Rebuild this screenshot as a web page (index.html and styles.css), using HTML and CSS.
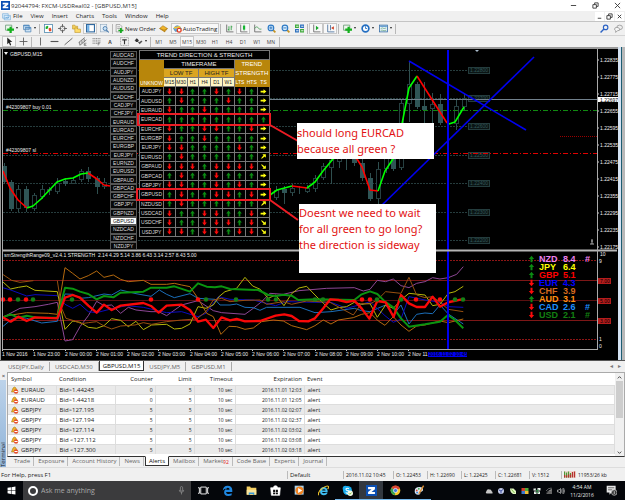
FILE: index.html
```html
<!DOCTYPE html>
<html lang="en">
<head>
<meta charset="utf-8">
<title>92044794: FXCM-USDReal02 - [GBPUSD,M15]</title>
<link rel="stylesheet" href="styles.css">
</head>
<body>
<svg class="sprite" aria-hidden="true">
  <symbol id="z" viewBox="0 0 16 16"><rect width="16" height="16" fill="#0b4fb3"/><path d="M3 3h10v3l-5 4h5v3H3v-3l5-4H3z" fill="#fff"/></symbol>
  <symbol id="charts" viewBox="0 0 16 16"><path d="M1 3h10v8H1zM4 6h11v8H4z" fill="#d9ecfa" stroke="#6aa5d8"/><path d="M6 11l2-2 2 2 3-3" fill="none" stroke="#3c87c8"/></symbol>
  <symbol id="new" viewBox="0 0 16 16"><path d="M1 2h11v9H1z" fill="#eef6ee" stroke="#6d9c78" stroke-width="1.5"/><path d="M8 5h4v3h4v4h-4v4H8v-4H4V8h4z" fill="#14b01c"/></symbol>
  <symbol id="wins" viewBox="0 0 16 16"><path d="M1 2h10v8H1zM4 6h10v8H4z" fill="#d8ebfb" stroke="#5689b6" stroke-width="1.4"/><path d="M1 3h10M4 7h10" stroke="#4381bd" stroke-width="2"/></symbol>
  <symbol id="market" viewBox="0 0 16 16"><rect x="1" y="1" width="14" height="14" fill="#fff" stroke="#4d88ad" stroke-width="1.4"/><path d="M3 9V5l3-2 2 2-2 4z" fill="#1db029"/><path d="M8 8l3-2 2 3v4H9z" fill="#e24b26"/></symbol>
  <symbol id="target" viewBox="0 0 16 16"><circle cx="8" cy="8" r="4.5" fill="none" stroke="#555" stroke-width="1.5"/><path d="M8 0v6M8 10v6M0 8h6M10 8h6" stroke="#555" stroke-width="1.5"/></symbol>
  <symbol id="folders" viewBox="0 0 16 16"><path d="M1 2h4l1 2h4v5H1z" fill="#f3cf5b" stroke="#b98e20"/><path d="M5 7h4l1 2h5v6H5z" fill="#ffdc6b" stroke="#b98e20"/></symbol>
  <symbol id="panel" viewBox="0 0 16 16"><rect x="1" y="1" width="14" height="13" fill="#fff" stroke="#31699f" stroke-width="2"/><path d="M2 2h4v11H2z" fill="#6fb0e6"/></symbol>
  <symbol id="tester" viewBox="0 0 16 16"><rect x="1" y="1" width="11" height="13" fill="#e7f0f8" stroke="#8aa4bb"/><circle cx="9" cy="8" r="3.5" fill="#cde5f8" stroke="#4275a8" stroke-width="1.5"/><path d="M11.500 11l4 4" stroke="#4275a8" stroke-width="2"/></symbol>
  <symbol id="order" viewBox="0 0 16 16"><path d="M2 1h7l3 3v10H2z" fill="#f4f4f4" stroke="#777"/><path d="M4 5h5M4 8h5" stroke="#777"/><path d="M9 7h3v3h3v3h-3v3H9v-3H6v-3h3z" fill="#12a81c"/></symbol>
  <symbol id="gold" viewBox="0 0 16 16"><path d="M1 8l6-5 8 5-5 6z" fill="#f1b62b" stroke="#a06d0d"/><path d="M1 8l8 3 6-3M9 11l1 3" stroke="#a06d0d" fill="none"/></symbol>
  <symbol id="robot" viewBox="0 0 16 16"><path d="M1 8q6-10 14 0l-3 5H4z" fill="#65ace2" stroke="#376f9d"/><path d="M2 7l11-2" stroke="#f5c434" stroke-width="3"/><circle cx="11" cy="11" r="4.500" fill="#e23b20"/><rect x="9" y="9" width="4" height="4" fill="#fff"/></symbol>
  <symbol id="bars" viewBox="0 0 16 16"><path d="M3 1v13h12" fill="none" stroke="#666" stroke-width="1.500"/><path d="M7 4v8M5 10h2M11 3v8M11 5h2" stroke="#2b9b3d" stroke-width="1.500"/></symbol>
  <symbol id="candle" viewBox="0 0 16 16"><path d="M3 1v13h12" fill="none" stroke="#666" stroke-width="1.500"/><path d="M9 1v11" stroke="#12902c"/><rect x="7" y="3" width="4" height="7" fill="#15b530"/></symbol>
  <symbol id="line" viewBox="0 0 16 16"><path d="M3 1v13h12" fill="none" stroke="#666" stroke-width="1.500"/><path d="M3 8q4-6 7 0 2 2 5 1" fill="none" stroke="#3a9a4a" stroke-width="1.300"/></symbol>
  <symbol id="zin" viewBox="0 0 16 16"><path d="M10 10l5 5" stroke="#c59424" stroke-width="3"/><circle cx="7" cy="7" r="5" fill="#d8efff" stroke="#2b78c4" stroke-width="2"/><path d="M4 7h6M7 4v6" stroke="#2269b5" stroke-width="1.500"/></symbol>
  <symbol id="zout" viewBox="0 0 16 16"><path d="M10 10l5 5" stroke="#c59424" stroke-width="3"/><circle cx="7" cy="7" r="5" fill="#d8efff" stroke="#2b78c4" stroke-width="2"/><path d="M4 7h6" stroke="#2269b5" stroke-width="1.500"/></symbol>
  <symbol id="tiles" viewBox="0 0 16 16"><path d="M0 1h7v6H0zM9 9h7v6H9z" fill="#3fa93b"/><path d="M9 1h7v6H9zM0 9h7v6H0z" fill="#2e71bd"/><path d="M2 4h4M11 4h4M2 12h4M11 12h4" stroke="#fff" stroke-width="1.500"/></symbol>
  <symbol id="shift" viewBox="0 0 16 16"><path d="M3 1v13h12" fill="none" stroke="#666" stroke-width="1.500"/><path d="M7 3v8l5-4z" fill="#17a72a"/></symbol>
  <symbol id="scroll" viewBox="0 0 16 16"><path d="M3 1v13h12M8 2v9" fill="none" stroke="#476f9c" stroke-width="1.500"/><path d="M14 4v6l-5-3z" fill="#d04326"/></symbol>
  <symbol id="clock" viewBox="0 0 16 16"><circle cx="8" cy="8" r="6" fill="#fff" stroke="#246fc2" stroke-width="3"/><path d="M8 4v4h3" fill="none" stroke="#246fc2" stroke-width="1.500"/></symbol>
  <symbol id="tmpl" viewBox="0 0 16 16"><rect x="1" y="2" width="14" height="12" fill="#eaf4fc" stroke="#3f74a8" stroke-width="1.500"/><path d="M2 4h12" stroke="#4d8fcb" stroke-width="2"/><path d="M3 8l3-1 3 1 4-1M3 11h3l3 1 4-1" fill="none" stroke="#3f8f5a"/></symbol>
  <symbol id="find" viewBox="0 0 16 16"><circle cx="10" cy="6" r="4" fill="none" stroke="#2b62c4" stroke-width="2"/><path d="M7 9l-6 6" stroke="#2b62c4" stroke-width="2.500"/></symbol>
  <symbol id="chat" viewBox="0 0 16 16"><ellipse cx="10" cy="6" rx="5" ry="4" fill="#eee" stroke="#999" stroke-width="1.500"/><path d="M1 9q0-3 4-3t5 3-4 3l-3 3v-3q-2-1-2-3z" fill="#f6f6f6" stroke="#999" stroke-width="1.500"/></symbol>
  <symbol id="arrow" viewBox="0 0 16 16"><path d="M4 1v12l3-3 2 5 2-1-2-5h4z" fill="#222"/></symbol>
  <symbol id="cross" viewBox="0 0 16 16"><path d="M8 1v14M1 8h14" stroke="#555" stroke-width="1.500"/></symbol>
  <symbol id="vline" viewBox="0 0 16 16"><path d="M8 1v14" stroke="#555" stroke-width="1.500"/></symbol>
  <symbol id="hline" viewBox="0 0 16 16"><path d="M1 8h14" stroke="#555" stroke-width="2"/></symbol>
  <symbol id="tline" viewBox="0 0 16 16"><path d="M1 14L15 2" stroke="#555" stroke-width="1.500"/></symbol>
  <symbol id="chan" viewBox="0 0 16 16"><path d="M1 10L12 1M3 15L15 5M3 9v5M7 6v5M11 3v5" stroke="#555" stroke-width="1.300"/><path d="M11 11h4M11 11v4h4M11 13h3" fill="none" stroke="#555"/></symbol>
  <symbol id="fibo" viewBox="0 0 16 16"><path d="M1 3h14M1 7h14M1 11h10" stroke="#666" stroke-width="1.500" stroke-dasharray="2 1"/><path d="M11 10h4M11 10v5M11 12h3" stroke="#555" fill="none"/></symbol>
  <symbol id="label" viewBox="0 0 16 16"><rect x="1" y="1" width="14" height="14" fill="none" stroke="#777" stroke-dasharray="2 1"/><path d="M4 5h8M8 5v8" stroke="#333" stroke-width="2"/></symbol>
  <symbol id="marks" viewBox="0 0 16 16"><path d="M1 6l4-4 4 4-2 1v2H3V7z" fill="#333"/><path d="M7 9l3 4 5-5-2-2-3 3-2-1z" fill="#555"/></symbol>
  <symbol id="bell" viewBox="0 0 16 16"><path d="M3 9l2-5q3-4 6 0l2 6-2 2H2z" fill="#eeb62e" stroke="#946a12"/><circle cx="11" cy="11" r="4.500" fill="#e5512d"/><path d="M8 11h6" stroke="#fff" stroke-width="2"/></symbol>
  <symbol id="net" viewBox="0 0 24 14"><rect width="24" height="14" fill="#f2d9d2"/><path d="M1 1v12M5 3v10M9 1v12M13 4v9" stroke="#4c9a36" stroke-width="2.500"/><path d="M1 8v5M5 9v4M9 7v6M13 7v6M17 2v11M21 1v12" stroke="#b5302c" stroke-width="2.500"/></symbol>
  <symbol id="start" viewBox="0 0 16 16"><path d="M1 3l6-1v5.500H1zM8 2l7-1v6.500H8zM1 8.500h6V14l-6-1zM8 8.500h7V15l-7-1z" fill="#fff"/></symbol>
  <symbol id="mic" viewBox="0 0 16 16"><rect x="6" y="1" width="4" height="8" rx="2" fill="none" stroke="#aaa"/><path d="M4 7q0 4 4 4t4-4M8 11v4" fill="none" stroke="#aaa"/></symbol>
  <symbol id="tasks" viewBox="0 0 16 16"><path d="M4 3h8v10H4zM0 4h2v8H0M16 4h-2v8h2" fill="none" stroke="#fff" stroke-width="1.300"/></symbol>
  <symbol id="edge" viewBox="0 0 16 16"><path d="M1 8Q2 1 8 1q7 0 7 7v2H6q0 3 4 3 2 0 4-1v3q-2 1-5 1-6 0-6-6 0-3 4-5Q3 5 1 8zM6 7h5q0-3-2.500-3T6 7z" fill="#1f87e0"/></symbol>
  <symbol id="folder" viewBox="0 0 16 16"><path d="M1 2h5l1 2h8v10H1z" fill="#f4cf62"/><path d="M1 7h14v7H1z" fill="#fbe69c"/><path d="M4 14v-3h8v3h-2v-1H6v1z" fill="#3a9ad9"/></symbol>
  <symbol id="store" viewBox="0 0 16 16"><path d="M1 4h14l-1 11H2zM5 4q0-3 3-3t3 3" fill="#fff" stroke="#fff"/><path d="M4.500 7h3v3h-3zM8.500 7h3v3h-3zM4.500 11h3v2.500h-3zM8.500 11h3v2.500h-3z" fill="#111"/></symbol>
  <symbol id="wmp" viewBox="0 0 16 16"><rect x="1" y="1" width="13" height="13" fill="#a9d3ee"/><circle cx="8" cy="8" r="6" fill="#f08322"/><path d="M6 4.500v7l6-3.500z" fill="#fff"/></symbol>
  <symbol id="ie" viewBox="0 0 16 16"><path d="M3 7q1-4 5.500-4T14 8.500V10H6q0 2 2.500 2 2 0 3-1h2.500q-1 4-5.500 4Q3 15 3 9.500zM6 8h5q0-2-2.500-2T6 8z" fill="#3fbdf1"/><path d="M1 15Q-1 10 6 5t9-3q1 1-1 4" fill="none" stroke="#f1c62c" stroke-width="1.500"/></symbol>
  <symbol id="skype" viewBox="0 0 16 16"><circle cx="5" cy="5" r="4" fill="#19aef0"/><circle cx="8" cy="8" r="6.500" fill="#19aef0"/><path d="M10 5.500Q8 4 6.500 5t0 2.300 3 1.200 0 2.500-4-.5" fill="none" stroke="#fff" stroke-width="1.500"/><circle cx="12" cy="12" r="4" fill="#f3f9e8"/><path d="M10 12l1.500 1.500L14 11" fill="none" stroke="#6db31e" stroke-width="1.300"/></symbol>
  <symbol id="chrome" viewBox="0 0 16 16"><circle cx="8" cy="8" r="7" fill="#f6c728"/><path d="M8 8L2 4.400A7 7 0 0 1 14.500 5z" fill="#dc4535"/><path d="M8 8l-1 7A7 7 0 0 1 2 4.400z" fill="#35a252"/><circle cx="8" cy="8" r="3" fill="#3f7de0" stroke="#fff"/></symbol>
  <symbol id="paint" viewBox="0 0 16 16"><path d="M1 9q0-6 7-6 6 0 5 5-1 2-4 2 1 4-3 4-5 0-5-5z" fill="#d8e7f5"/><circle cx="4" cy="8" r="1.300" fill="#d94b2d"/><circle cx="7" cy="5.500" r="1.300" fill="#3caa41"/><circle cx="4.500" cy="11" r="1.300" fill="#2d77d2"/><path d="M7 13L14 1" stroke="#de9237" stroke-width="2"/></symbol>
  <symbol id="cloud" viewBox="0 0 16 16"><path d="M3 13q-3-2 0-5 1-5 6-3 4-1 4 3 3 1 2 5z" fill="#c6c6c6"/></symbol>
  <symbol id="orb" viewBox="0 0 16 16"><circle cx="8" cy="8" r="6" fill="#c4cbe6"/><path d="M4 6l4 2 4-3M8 8v5" stroke="#3c4f9e" stroke-width="2" fill="none"/></symbol>
  <symbol id="leaf" viewBox="0 0 16 16"><path d="M2 3h7l5 5v6H8q-6-3-6-11z" fill="#dff5c0"/><path d="M5 5l6 7" stroke="#5eaa20" stroke-width="1.500"/></symbol>
  <symbol id="flag" viewBox="0 0 16 16"><path d="M1 2h7v6H1z" fill="#d7402b"/><path d="M8 2h7v6H8z" fill="#51ac3a"/><path d="M1 8h7v6H1z" fill="#3d79cd"/><path d="M8 8h7v6H8z" fill="#f1bf35"/></symbol>
  <symbol id="sync" viewBox="0 0 16 16"><path d="M1 3h5v4H1zM9 2h6v5H9zM2 9h5v5H2zM9 9h5v5H9z" fill="#eee"/><path d="M5 5l3 3 4-3M5 12l3-3 4 3" stroke="#2fa84c" fill="none" stroke-width="1.500"/></symbol>
  <symbol id="wifi" viewBox="0 0 16 16"><path d="M2 14L14 2v12z" fill="#666"/><path d="M2 8Q6 2 13 2M4 11q3-5 9-5" stroke="#bbb" fill="none"/></symbol>
  <symbol id="vol" viewBox="0 0 16 16"><path d="M1 6h3l3-3v10l-3-3H1zM9 5q2 3 0 6M11 3q4 5 0 10M13 2q4 6 0 12" fill="none" stroke="#ddd" stroke-width="1.200"/></symbol>
  <symbol id="note" viewBox="0 0 16 16"><path d="M1 1h13v10H8l-3 3v-3H1z" fill="#e6e6e6"/><path d="M3 4h9M3 7h6" stroke="#333"/><circle cx="12" cy="11" r="4" fill="#333" stroke="#ccc"/><path d="M12 9v4" stroke="#fff"/></symbol>
  <symbol id="u" viewBox="0 0 12 12"><path d="M6 1l4 5H7.500v5h-3V6H2z" fill="#0b8a12"/></symbol>
  <symbol id="d" viewBox="0 0 12 12"><path d="M6 11L2 6h2.500V1h3v5H10z" fill="#fa0b0b"/></symbol>
  <symbol id="r" viewBox="0 0 12 12"><path d="M11 6L6 10V7.500H1v-3h5V2z" fill="#ffff10"/></symbol>
  <symbol id="n" viewBox="0 0 12 12"><path d="M10 2v6L8 6l-5 4-1-1 4-5-2-2z" fill="#ffff10"/></symbol>
  <symbol id="s" viewBox="0 0 12 12"><path d="M10 10H4l2-2-4-5 1-1 5 4 2-2z" fill="#ffff10"/></symbol>
</svg>

<header class="titlebar">
  <svg class="icon"><use href="#z"/></svg>
  <span>92044794: FXCM-USDReal02 - [GBPUSD,M15]</span>
  <div class="window-buttons">
    <button aria-label="Minimize"><svg class="glyph" viewBox="0 0 8 8"><path d="M1 4h6"/></svg></button>
    <button aria-label="Restore"><svg class="glyph" viewBox="0 0 8 8"><path d="M1 3h4v4H1zM3 3V1h4v4H5"/></svg></button>
    <button aria-label="Close"><svg class="glyph" viewBox="0 0 8 8"><path d="M1 1l6 6M7 1L1 7"/></svg></button>
  </div>
</header>
<nav class="menubar">
  <svg class="icon"><use href="#charts"/></svg>
  <button>File</button><button>View</button><button>Insert</button><button>Charts</button><button>Tools</button><button>Window</button><button>Help</button>
  <div class="child-buttons">
    <button aria-label="Minimize chart"><svg class="glyph" viewBox="0 0 8 8"><path d="M2 6h4"/></svg></button>
    <button aria-label="Restore chart"><svg class="glyph" viewBox="0 0 8 8"><path d="M1 3h4v4H1zM3 3V1h4v4H5"/></svg></button>
    <button aria-label="Close chart"><svg class="glyph" viewBox="0 0 8 8"><path d="M2 2l4 4M6 2L2 6"/></svg></button>
  </div>
</nav>
<div class="toolbar standard" id="standard"></div>
<div class="toolbar drawing" id="drawing"></div>

<main class="chart">
  <svg class="plot" id="plot" viewBox="0 47 625 313"></svg>
  <div class="symbols" id="symbols"></div>
  <table class="trend">
    <colgroup><col class="pair"><col span="9"></colgroup>
    <thead>
      <tr class="heading"><th colspan="10">TREND DIRECTION &amp; STRENGTH</th></tr>
      <tr><th class="gold corner" rowspan="3">UNKNOW</th><th class="heading" colspan="6">TIMEFRAME</th><th class="gold" colspan="3">TREND</th></tr>
      <tr><th class="amber" colspan="3">LOW TF</th><th class="amber" colspan="3">HIGH TF</th><th class="gold" colspan="3">STRENGTH</th></tr>
      <tr class="frames"><th>M15</th><th>M30</th><th>H1</th><th>H4</th><th>D1</th><th>W1</th><th class="gold">LTS</th><th class="gold">HTS</th><th class="gold">TS</th></tr>
    </thead>
    <tbody id="trend"></tbody>
  </table>
  <svg class="marks" viewBox="0 47 625 313">
    <rect x="138" y="114" width="132" height="11"/><rect x="137" y="189" width="133" height="11"/>
    <path d="M270 125l28 16M270 200l28 20"/>
  </svg>
  <p class="note first">should long EURCAD<br>because all green ?</p>
  <p class="note second">Doesnt we need to wait<br>for all green to go long?<br>the direction is sideway</p>
  <table class="strength"><tbody id="strength"></tbody></table>
</main>

<nav class="chart-tabs">
  <button>USDJPY,Daily</button><button>USDCAD,M30</button><button class="active">GBPUSD,M15</button><button>USDJPY,M5</button><button>GBPUSD,M1</button>
  <span class="arrows">◂ &nbsp; ▸</span>
</nav>

<section class="terminal">
  <div class="side"><button aria-label="Close terminal">×</button><span>Terminal</span></div>
  <div class="terminal-main">
    <div class="alerts-wrap">
      <table class="alerts">
        <thead><tr><th class="c1">Symbol</th><th class="c2">Condition</th><th class="c3 num">Counter</th><th class="c4 num">Limit</th><th class="c5 num">Timeout</th><th class="c6 num">Expiration</th><th>Event</th></tr></thead>
        <tbody id="alerts"></tbody>
      </table>
      <div class="scrollbar"><button aria-label="Scroll up"><svg class="glyph" viewBox="0 0 8 8"><path d="M2 5l2-2 2 2"/></svg></button><i></i><button aria-label="Scroll down"><svg class="glyph" viewBox="0 0 8 8"><path d="M2 3l2 2 2-2"/></svg></button></div>
    </div>
    <nav class="terminal-tabs">
      <button>Trade</button><button>Exposure</button><button>Account History</button><button>News</button><button class="active">Alerts</button><button>Mailbox</button><button>Market<small>92</small></button><button>Code Base</button><button>Experts</button><button>Journal</button>
    </nav>
  </div>
</section>

<footer class="status">
  <span class="help">For Help, press F1</span>
  <span class="profile">Default</span>
  <span class="time">2016.11.02 10:45</span>
  <span class="ohlc">O: 1.22453</span><span class="ohlc">H: 1.22690</span><span class="ohlc">L: 1.22425</span><span class="ohlc">C: 1.22681</span>
  <span class="volume">V: 1512</span>
  <span class="traffic"><svg class="net"><use href="#net"/></svg>11953/26 kb</span>
</footer>

<div class="taskbar">
  <button class="start" aria-label="Start"><svg class="icon"><use href="#start"/></svg></button>
  <label class="search"><i></i><input type="text" placeholder="Ask me anything" aria-label="Ask me anything"><svg class="icon"><use href="#mic"/></svg></label>
  <div class="apps" id="apps"></div>
  <div class="tray" id="tray"></div>
  <div class="clock"><span>4:54 AM</span><span>11/2/2016</span></div>
  <button class="center" aria-label="Notifications"><svg class="icon"><use href="#note"/></svg></button>
</div>
<script src="app.js"></script>
</body>
</html>
```
FILE: styles.css
```css
* { box-sizing: border-box; }
body {
  margin: 0;
  min-height: 100vh;
  display: flex;
  flex-direction: column;
  overflow: hidden;
  background: #f0f0f0;
  color: #222;
  font: 6px/8px "Open Sans", "Noto Sans", sans-serif;
}
button, input { font: inherit; color: inherit; background: none; border: 0; padding: 0; margin: 0; }
svg { display: block; }
.sprite { position: absolute; width: 0; height: 0; }
.icon { width: 9px; height: 9px; flex: none; }
.glyph { width: 7px; height: 7px; fill: none; stroke: #333; stroke-width: 1; }

.titlebar { display: flex; align-items: center; height: 11px; padding-left: 1px; gap: 1px; background: #fff; color: #333; }
.window-buttons { display: flex; margin-left: auto; gap: 15px; padding-right: 4px; }
.menubar { display: flex; align-items: center; height: 10px; padding-left: 2px; gap: 8px; }
.menubar .icon { margin-right: -6px; }
.child-buttons { display: flex; margin-left: auto; gap: 1px; padding-right: 1px; }
.child-buttons button { background: #fff; width: 9px; padding: 1px; }

.toolbar { display: flex; align-items: center; padding-left: 2px; border-top: 1px solid #c4c4c4; }
.standard { height: 14px; }
.drawing { height: 12px; border-top-color: #d4d4d4; }
.toolbar button { display: flex; align-items: center; justify-content: center; width: 14px; height: 11px; font-size: 5px; white-space: nowrap; }
.toolbar .wide { width: 18px; }
.toolbar .wide::after { content: ""; border: 1px solid transparent; border-top: 2px solid #222; margin-left: 2px; }
.toolbar .text { width: auto; font-size: 6px; gap: 1px; padding: 0 1px; }
.toolbar .pressed { background: #f8f8f8; border: 1px solid #c8c8c8; }
.toolbar .sep { width: 1px; height: 10px; margin: 0 1px; background: #b8b8b8; }
.toolbar .push { margin-left: auto; }
.drawing button { color: #444; }

.chart { position: relative; background: #000; }
.plot { width: 100%; }
.plot text { font: 5px "Liberation Sans", sans-serif; fill: #eee; }
.plot .dim { fill: #35595a; }
.plot .dark { fill: #000; }
.marks { position: absolute; inset: 0; width: 100%; fill: none; stroke: #ed1c24; stroke-width: 2; }
.symbols { position: absolute; left: 110px; top: 4px; width: 27px; height: 199px; display: flex; flex-direction: column; }
.symbols button { flex: 1; border: 1px solid #555; background: #080808; color: #ddd; font: 5px/6px "Liberation Sans", sans-serif; }
.symbols .active { background: #fff; color: #111; }

.trend { position: absolute; left: 139px; top: 3px; width: 131px; height: 187px; table-layout: fixed; border-collapse: collapse; background: #000; color: #ddd; font: 5px/6px "Liberation Sans", sans-serif; }
.trend tr { height: 9px; }
.trend th, .trend td { padding: 0; border: 1px solid #777; font-weight: 400; text-align: center; white-space: nowrap; overflow: hidden; }
.trend .pair { width: 24px; }
.trend .heading, .trend .heading th { background: #000; color: #eee; font-size: 6px; }
.trend tr .gold { background: #b8860b; color: #fff; border-color: #b8860b; font-size: 6px; }
.trend tr .corner { vertical-align: bottom; font-size: 5px; }
.trend .amber { background: #daa520; color: #222; font-size: 6px; }
.trend .frames th { background: #fff6c4; color: #222; font-size: 5px; }
.trend .frames .gold { background: #b8860b; color: #fff; font-size: 5px; }
.trend svg { width: 7px; height: 7px; margin: 0 auto; }

.note { position: absolute; margin: 0; background: #fff; color: #e21212; font: 11px/16px "Noto Sans", sans-serif; white-space: nowrap; }
.first { left: 297px; top: 76px; width: 137px; height: 36px; padding-top: 2px; }
.second { left: 299px; top: 157px; width: 137px; height: 69px; padding-top: 1px; }
.strength { position: absolute; left: 527px; top: 208px; border-collapse: collapse; font: bold 9px/8px "Liberation Sans", sans-serif; }
.strength td { padding: 0; width: 12px; height: 8px; }
.strength td:nth-child(2) { width: 24px; }
.strength td:nth-child(3) { width: 22px; }
.strength svg { width: 9px; height: 8px; }

.chart-tabs { display: flex; height: 12px; padding: 1px 0 1px 3px; border-top: 1px solid #555; color: #666; }
.chart-tabs button { padding: 0 5px; border-right: 1px solid #aaa; line-height: 8px; }
.chart-tabs .active { color: #111; background: #fff; border: 1px solid #333; border-top: 0; padding: 0 3px; margin-top: -1px; }
.arrows { margin-left: auto; padding-right: 4px; color: #777; }

.terminal { display: flex; height: 95px; }
.side { width: 7px; display: flex; flex-direction: column; justify-content: space-between; }
.side button { height: 8px; line-height: 8px; }
.side span { flex: 1; writing-mode: vertical-rl; transform: rotate(180deg); background: linear-gradient(#8fb3d8, #bdd3ea); width: 6px; line-height: 6px; }
.terminal-main { flex: 1; min-width: 0; display: flex; flex-direction: column; }
.alerts-wrap { display: flex; height: 85px; background: #fff; border: 1px solid #aaa; border-bottom: 1px solid #333; }
.alerts { flex: 1; align-self: flex-start; height: 81px; background: #fff; border-collapse: collapse; table-layout: fixed; }
.alerts thead tr { height: 12px; }
.alerts th { font-weight: 400; text-align: left; padding: 0 3px; }
.alerts td { padding: 0 2px 0 3px; border-right: 1px solid #ddd; border-top: 1px solid #ddd; line-height: 8px; }
.alerts tbody tr:nth-child(odd) { background: #eaeaea; }
.alerts .num { text-align: right; padding: 0 2px; }
.alerts td.num { font-size: 5px; }
.alerts .c1 { width: 48px; } .alerts .c2 { width: 59px; } .alerts .c3 { width: 40px; }
.alerts .c4 { width: 39px; } .alerts .c5 { width: 41px; } .alerts .c6 { width: 69px; }
.alerts .sym { display: flex; gap: 2px; margin-left: -1px; }
.alerts .icon { height: 8px; }
.scrollbar { width: 9px; display: flex; flex-direction: column; background: #f0f0f0; }
.scrollbar button { height: 8px; padding: 0 1px; }
.scrollbar i { height: 37px; margin: 0 1px auto; background: #cdcdcd; }
.terminal-tabs { display: flex; padding-left: 4px; gap: 1px; color: #666; height: 10px; }
.terminal-tabs button { display: flex; padding: 0 3px; line-height: 8px; height: 9px; border-right: 1px solid #bbb; }
.terminal-tabs .active { background: #fff; color: #111; border: 1px solid #333; border-top-color: #fff; margin-top: -1px; height: 10px; }
.terminal-tabs small { color: #e01010; font-size: 5px; line-height: 10px; }

.status { display: flex; align-items: center; height: 14px; border-top: 1px solid #ddd; padding-left: 1px; white-space: nowrap; margin-top: auto; }
.status span { border-left: 1px solid #bbb; padding-left: 2px; font-size: 5px; }
.status .help { border: 0; padding: 0; flex: 1; font-size: 6px; }
.status .profile { width: 56px; font-size: 6px; }
.status .time { width: 50px; }
.status .ohlc { width: 34px; }
.status .volume { width: 32px; }
.status .traffic { display: flex; gap: 2px; width: 64px; }
.net { width: 12px; height: 7px; }

.taskbar { display: flex; align-items: center; height: 19px; background: #04060a; color: #eee; }
.start { width: 23px; display: flex; justify-content: center; }
.search { display: flex; align-items: center; width: 168px; height: 19px; background: #3b3b3d; padding: 0 5px; gap: 3px; }
.search i { width: 10px; height: 10px; border: 2px solid #fff; border-radius: 50%; }
.search input { flex: 1; min-width: 0; font-size: 7px; outline: 0; }
.search input::placeholder { color: #aaa; opacity: 1; }
.apps { display: flex; }
.apps button { width: 24px; height: 19px; display: flex; align-items: center; justify-content: center; border-bottom: 1px solid transparent; border-top: 1px solid transparent; }
.apps .icon { width: 11px; height: 11px; }
.apps .open { border-bottom-color: #76b9ed; }
.apps .current { background: #333840; }
.tray { display: flex; margin-left: auto; gap: 4px; }
.tray .icon { width: 8px; height: 8px; }
.clock { display: flex; flex-direction: column; align-items: center; width: 34px; font-size: 5px; }
.center { width: 24px; display: flex; justify-content: center; margin-right: 2px; }
.center .icon { width: 11px; height: 11px; }
```
FILE: app.js
```js
const byId = id => document.getElementById(id);
const icon = name => `<svg class="icon"><use href="#${name}"/></svg>`;

// Toolbars: "|" is a separator, "*" adds a drop-down mark, "!" marks a pressed button.
function tools(list) {
  return list.map(t => {
    if (t === "|") return '<span class="sep"></span>';
    const cls = (t.includes("*") ? "wide" : "") + (t.includes("!") ? " pressed" : "");
    const name = t.replace(/[*!]/g, "");
    return `<button class="${cls}" aria-label="${name}">${icon(name)}</button>`;
  }).join("");
}
byId("standard").innerHTML =
  tools(["new*", "wins*", "|", "market", "target", "folders", "panel!", "tester", "|"]) +
  `<button class="text">${icon("order")}New Order</button>` + tools(["gold"]) +
  `<button class="text pressed">${icon("robot")}AutoTrading</button>` +
  tools(["|", "bars", "candle!", "line", "zin", "zout", "tiles", "|", "shift!", "scroll!", "|", "new*", "clock*", "tmpl*", "|"]) +
  `<button class="push" aria-label="Search">${icon("find")}</button><button aria-label="Chat">${icon("chat")}</button>`;
byId("drawing").innerHTML =
  tools(["arrow!", "cross", "|", "vline", "hline", "tline", "chan", "fibo"]) +
  "<button><b>A</b></button>" + tools(["label", "marks*", "|"]) +
  ["M1", "M5", "M15", "M30", "H1", "H4", "D1", "W1", "MN"]
    .map(t => `<button class="${t === "M15" ? "pressed" : ""}">${t}</button>`).join("") + tools(["|"]);

byId("symbols").innerHTML = ("AUDCAD AUDCHF AUDJPY AUDNZD AUDUSD CADCHF CADJPY CHFJPY EURAUD EURCAD EURCHF EURGBP " +
  "EURJPY EURNZD EURUSD GBPAUD GBPCAD GBPCHF GBPJPY GBPNZD GBPUSD NZDCAD NZDCHF NZDJPY").split(" ")
  .map(s => `<button class="${s === "GBPUSD" ? "active" : ""}">${s}</button>`).join("");

// One letter per column: up, down, right, north-east, south-east.
byId("trend").innerHTML = `AUDJPY dduududur
AUDUSD uduuuduur
EURAUD duuduuuur
EURCAD uuuuuuuuu
EURCHF duudduudr
EURGBP duuduuuur
EURJPY dduuuudur
EURUSD uduuuuuun
GBPAUD dddudddds
GBPCAD uduuduuur
GBPJPY dduududur
GBPUSD uduuddudr
NZDUSD uduuuuuun
USDCAD duudduudr
USDCHF duuddduds
USDJPY dduddudds`.split("\n").map(row => {
  const [pair, dirs] = row.split(" ");
  return `<tr><td>${pair}</td>${[...dirs].map(d => `<td><svg><use href="#${d}"/></svg></td>`).join("")}</tr>`;
}).join("");

byId("strength").innerHTML = [
  ["u", "NZD", "8.4", "#", "#ee82ee"], ["u", "JPY", "6.4", "", "#ffff00"], ["u", "GBP", "5.1", "", "#ff0000"],
  ["d", "EUR", "4.3", "", "#0000ff"], ["d", "CHF", "3.9", "", "#d2691e"], ["u", "AUD", "3.1", "", "#ff9010"],
  ["d", "CAD", "2.6", "#", "#1e90ff"], ["d", "USD", "2.1", "#", "#128012"]
].map(([d, c, v, h, color]) =>
  `<tr style="color:${color}"><td><svg><use href="#${d}"/></svg></td><td>${c}</td><td>${v}</td><td>${h}</td></tr>`).join("");

byId("alerts").innerHTML = [
  ["EURAUD", "Bid>1.44245", 0, "01 12:03"], ["EURAUD", "Bid>1.44218", 0, "01 12:05"],
  ["GBPJPY", "Bid>127.195", 5, "02 02:07"], ["GBPJPY", "Bid>127.194", 5, "02 02:37"],
  ["GBPJPY", "Bid>127.114", 5, "02 03:02"], ["GBPJPY", "Bid <127.112", 5, "02 03:08"],
  ["GBPJPY", "Bid <127.300", 5, "02 03:18"]
].map(([s, c, n, e]) => `<tr><td><div class="sym">${icon("bell")}${s}</div></td><td>${c}</td><td class="num">${n}</td>` +
  `<td class="num">5</td><td class="num">10 sec</td><td class="num">2016.11.${e}</td><td>alert</td></tr>`).join("");

byId("apps").innerHTML = ["tasks", "edge", "folder", "store", "wmp", "ie", "skype", "z", "chrome", "paint"]
  .map((n, i) => `<button class="${i > 5 ? "open" : ""}${n === "z" ? " current" : ""}" aria-label="${n}">${icon(n)}</button>`).join("");
byId("tray").innerHTML = ["cloud", "orb", "leaf", "flag", "sync", "wifi", "vol"].map(icon).join("");

// Price chart and strength indicator.
const line = (x1, y1, x2, y2, color, extra = "") =>
  `<path d="M${x1} ${y1}L${x2} ${y2}" stroke="${color}" fill="none" ${extra}/>`;
const poly = (points, color, w) =>
  `<polyline points="${points}" fill="none" stroke="${color}" stroke-width="${w}" stroke-linejoin="round"/>`;
const text = (x, y, s, cls = "") => `<text x="${x}" y="${y}" class="${cls}">${s}</text>`;
let out = '<rect y="47" width="625" height="313" fill="#000"/>';

[70, 98, 126, 155, 183, 212, 240].forEach((y, i) => {
  out += line(3, y + .5, 468, y + .5, "#263c3d", 'stroke-dasharray="2 1"');
  out += `<rect x="468.500" y="${y - 2.5}" width="21" height="6" fill="#0a1414" stroke="#243c3d"/>` +
    text(470, y + 2, "1.22" + (800 - i * 100), "dim");
});

// x, high, low, body top, body bottom, filled
[[4,163,184,166,182,1],[11,180,211,182,209,1],[18,185,212,189,209,0],[26,186,212,189,208,1],[34,193,211,195,209,0],
 [42,185,199,189,197,0],[49,187,195,189,191,0],[57,178,194,183,192,0],[65,178,186,181,184,1],[73,178,184,180,184,0],
 [81,169,182,171,180,0],[88,167,182,171,179,1],[97,176,194,178,187,1],[104,178,189,182,187,0],[276,186,200,190,198,0],
 [284,186,204,189,193,1],[292,184,196,188,193,0],[299,186,194,189,190,1],[307,185,193,188,192,0],[315,175,192,178,189,0],
 [323,163,180,166,178,0],[331,157,184,160,168,0],[339,152,168,155,162,0],[346,150,170,155,158,0],[354,152,166,155,163,1],
 [362,155,181,163,178,1],[370,173,201,178,199,1],[378,162,208,169,199,0],[386,154,173,158,169,0],[393,150,171,158,169,1],
 [401,100,170,103,168,0],[409,62,122,84,104,0],[417,82,109,84,107,1],[424,82,124,106,110,1],[432,93,124,104,109,0],
 [440,94,125,104,123,1],[456,99,130,106,124,0],[464,93,110,98,107,0]
].forEach(([x, h, l, t, b, f]) => {
  out += line(x + .5, h, x + .5, l, "#2f4f4f") +
    `<rect x="${x - 1.5}" y="${t + .5}" width="4" height="${b - t - 1}" fill="${f ? "#2f5556" : "#000"}" stroke="${f ? "#2f5556" : "#263f40"}"/>`;
});

out += line(3, 99.5, 597, 99.5, "#71808c") +
  line(3, 110.5, 597, 110.5, "#108a10", 'stroke-dasharray="5 2 1 2"') +
  line(3, 153.5, 597, 153.5, "#e00000", 'stroke-dasharray="5 2 1 2"') +
  line(560, 136.5, 597, 136.5, "#900", 'stroke-dasharray="1 1"') +
  line(409, 61, 526, 130, "#0000f0", 'stroke-width="1.600"') +
  line(380, 207, 534, 57, "#0000f0", 'stroke-width="1.600"');

[["3,171 10,188 18,200 27,208", "#f00"], ["27,208 33,206 41,199 57,182 65,179 73,178 81,174 88,173", "#0f0"],
 ["88,173 97,179 104,185 110,186", "#f00"], ["265,200 270,195 277,190 292,186", "#0f0"], ["292,186 307,188", "#f00"],
 ["307,188 315,182 323,171 333,159 345,152", "#0f0"], ["352,152 357,159 362,167 370,190 378,191", "#f00"],
 ["378,191 385,171 393,159 402,124 409,88 417,76", "#0f0"], ["417,76 447,123", "#f00"], ["449,124 455,122 464,107", "#0f0"]
].forEach(([p, c]) => { out += poly(p, c, 1.6); });

out += text(10, 56, "GBPUSD,M15") + '<path d="M4 52h4l-2 3z" fill="#eee"/><path d="M475 50h4l-2 2z" fill="#abc"/>' +
  text(6, 109, "#42309807 buy 0.01") + text(6, 152, "#42309807 sl");
for (let i = 0; i < 12; i++) {
  const y = 60 + i * 17;
  out += line(597, y, 599, y, "#ccc") + text(600, y + 2, (1.22835 - i * .0006).toFixed(5));
}
out += '<rect x="598" y="97" width="20" height="5" fill="#fff"/>' + text(600, 101.5, "1.22697", "dark") +
  '<path d="M590 244h4M592 244v-5M591 241h2" fill="none" stroke="#aaa"/>';

// Indicator pane
out += line(3, 260.5, 597, 260.5, "#8c1515", 'stroke-dasharray="2 1"') + line(3, 339.5, 597, 339.5, "#8c1515", 'stroke-dasharray="2 1"');
[280, 300, 320].forEach((y, i) => {
  out += line(3, y + .5, 598, y + .5, i === 1 ? "#591010" : "#7d1717") +
    `<rect x="598" y="${y - 2}" width="13" height="6" fill="#b51c1c"/>` + text(600, y + 3, (7 - 2 * i) + ".00", "dark");
});
out += text(600, 256, "10") + text(599, 263, "9") + text(599, 341, "1") + text(599, 348, "0") +
  text(4, 257, "smStrengthRange09_v2.4.1 STRENGTH&#160; 2.14 4.29 5.14 3.86 6.43 3.14 2.57 8.43 5.00");

// Series are stored at three units per pixel, measured from y = 245.
const series = [
  ["8,217 60,190 105,185 145,178 172,172 195,288 218,284 240,245 265,212 290,169 312,182 335,180 362,205 385,187 408,195 453,200 476,200 500,212 545,180 594,167 640,197 665,203 735,208 760,190 785,170 810,145 850,148 897,137 980,130 1063,128 1090,138 1110,133 1132,106 1157,110 1180,102 1203,122 1227,128 1250,115 1275,110 1298,98 1320,102 1345,98 1370,88 1390,65", "#8e4796", 3],
  ["8,245 32,225 55,215 80,220 125,234 172,229 195,147 218,148 240,160 265,158 312,147 335,150 362,135 408,146 453,154 478,135 500,148 523,158 570,146 594,160 645,163 660,180 690,180 710,177 735,187 760,188 780,196 800,187 900,187 945,203 993,200 1063,190 1085,197 1110,200 1157,180 1180,210 1203,180 1227,237 1250,208 1275,204 1298,206 1320,180 1345,207 1390,237", "#1b6fbb", 3],
  ["8,128 32,135 80,153 105,149 172,152 195,178 218,190 240,178 265,200 290,203 340,190 380,182 430,187 500,203 545,200 594,215 618,205 640,175 655,155 690,163 760,165 827,182 860,170 945,172 993,172 1040,190 1085,178 1110,170 1155,212 1180,232 1203,222 1227,155 1275,165 1320,172 1345,185 1390,187", "#0b0bc0", 3],
  ["8,110 32,132 55,127 80,123 105,136 172,140 195,253 218,228 240,232 265,247 290,250 312,242 335,221 362,226 385,245 408,229 430,254 455,240 500,238 523,252 545,250 570,237 594,185 618,190 640,180 657,155 675,140 710,130 735,97 758,123 781,133 805,160 827,150 852,182 875,146 897,129 920,124 945,150 970,175 993,195 1015,188 1040,185 1063,172 1085,178 1110,175 1132,217 1157,180 1180,190 1203,165 1227,145 1275,150 1298,182 1320,178 1345,145 1365,140 1390,124", "#b5b50a", 3],
  ["8,88 35,106 60,112 100,107", "#985010", 3],
  ["8,215 35,210 80,203 145,205 172,208 195,68 218,85 240,102 265,92 290,78 312,97 340,90 362,103 385,110 430,106 453,118 500,118 523,115 545,120 570,125 594,160 620,205 640,215 663,268 687,244 710,245 735,253 760,249 785,230 820,225 850,228 875,242 920,254 945,242 970,225 993,237 1015,225 1060,218 1085,208 1110,203 1135,228 1155,241 1180,215 1203,240 1227,259 1250,243 1275,240 1320,228 1345,233 1390,222", "#b5690e", 3],
  ["172,107 185,190 198,220 218,226 245,236 265,233 290,230 312,243 335,252 362,243 405,240 430,233 455,238 500,230 545,225 590,222 618,200 640,165 665,160 690,170 735,166 780,165 800,178 850,170 875,178 920,168 990,172 1060,210 1085,175 1110,177 1132,165 1157,140 1203,145 1227,97 1250,150 1275,158 1298,155 1320,172 1345,193 1390,200", "#985010", 3],
  ["8,217 32,208 55,218 80,212 110,218 172,218 195,128 218,131 240,140 265,147 290,163 312,153 340,157 362,143 430,140 453,128 500,128 523,124 570,140 594,115 620,125 645,127 665,124 690,132 775,135 805,150 827,153 850,149 875,152 895,165 945,163 1063,165 1085,148 1110,139 1132,147 1155,170 1180,187 1203,220 1227,245 1275,238 1320,230 1344,210 1365,225 1390,250", "#0a9410", 6],
  ["8,217 32,230 55,215 80,228 105,217 172,220 195,158 218,150 240,158 265,182 290,203 312,179 335,195 362,182 430,174 453,183 476,203 500,182 545,179 570,195 594,230 618,224 640,249 665,217 690,226 710,222 735,229 780,228 827,212 853,208 875,213 897,228 925,229 945,220 970,190 991,163 1015,165 1040,171 1063,167 1085,190 1108,221 1132,168 1157,172 1181,216 1203,150 1227,175 1250,186 1275,186 1298,155 1320,185 1345,172 1385,163", "#fa0808", 7]
];
out += `<g transform="translate(0 245) scale(.3333)">${series.map(s => poly(...s)).join("")}</g>`;
[[3,1],[10,1],[18,0],[26,1],[33,0],[72,0],[151,1],[198,1],[206,0],[236,0],[268,0],[276,0],[315,0],[323,0],[362,1],[370,1],[377,0],[401,0],[416,1],[440,1],[455,0],[463,0]]
  .forEach(([x, red]) => { out += `<circle cx="${x}" cy="299.500" r="2.300" fill="${red ? "#ff0b0b" : "#168016"}"/>`; });

out += line(448, 50, 448, 349, "#0000f0", 'stroke-width="2"');
["1 Nov 2016", "1 Nov 23:00", ...[...Array(12).keys()].map(h => `2 Nov ${String(h).padStart(2, "0")}:00`)].forEach((t, i) => {
  const x = Math.round(2 + i * 31.25);
  out += line(x + .5, 349, x + .5, 351, "#ccc") + text(x, 356, t);
});
out += '<rect x="428" y="352" width="39" height="5" fill="#0000f0"/>' + text(429, 356, "2016.11.02 10:45", "dark") +
  line(2, 349.5, 598, 349.5, "#aaa") + line(2, 250.5, 617, 250.5, "#b5b5b5", 'stroke-width="2"') +
  line(597.5, 49, 597.5, 350, "#aaa") + line(0, 48, 618, 48, "#999", 'stroke-width="2"') + line(2.5, 48, 2.5, 350, "#aaa") +
  '<rect y="47" width="1" height="313" fill="#999"/>' +
  '<path d="M618 47h4v313h-4z" fill="#d4e2f2"/><path d="M621 47h1v313h-1z" fill="#1d5d72"/><path d="M622 47h3v313h-3z" fill="#b9b9b9"/>';
byId("plot").innerHTML = out;
```
